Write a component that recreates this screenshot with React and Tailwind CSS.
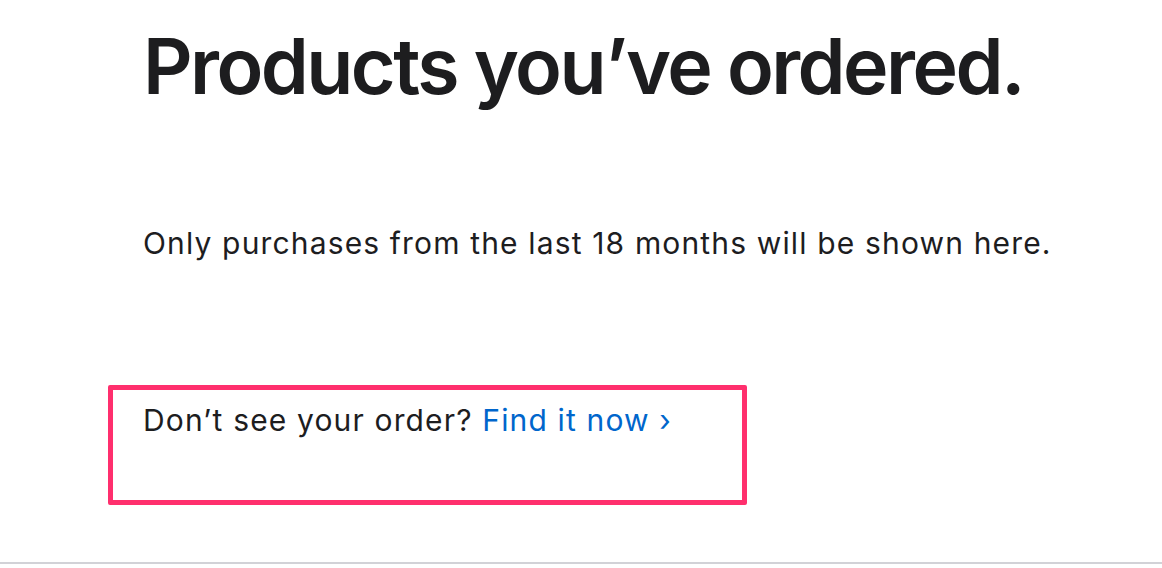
export default function App() {
  const font = { fontFamily: 'Inter, "Noto Sans", sans-serif' };
  return (
    <div className="w-[1162px] h-[568px] bg-white overflow-hidden flex flex-col" style={font}>
      <div className="flex-1 pl-[143px]">
        <h1 className="mt-[22px] text-[77px] leading-[88px] font-semibold text-[#1d1d1f] tracking-[-2.55px] whitespace-nowrap">
          Products you’ve ordered.
        </h1>
        <p className="mt-[115px] text-[30px] leading-[36px] text-[#1d1d1f] tracking-[1.15px] whitespace-nowrap">
          Only purchases from the last 18 months will be shown here.
        </p>
        <div className="mt-[124px] -ml-[35px] w-[639px] h-[120px] border-[5px] border-[#ff2f6d] rounded-[2px] pl-[30px] pt-[12px]">
          <p className="text-[30px] leading-[36px] text-[#1d1d1f] tracking-[1.15px] whitespace-nowrap">
            Don’t see your order?{" "}
            <a className="text-[#0066cc]">Find it now ›</a>
          </p>
        </div>
      </div>
      <div className="h-[2px] bg-[#d2d2d7] mb-[4px]" />
    </div>
  );
}
